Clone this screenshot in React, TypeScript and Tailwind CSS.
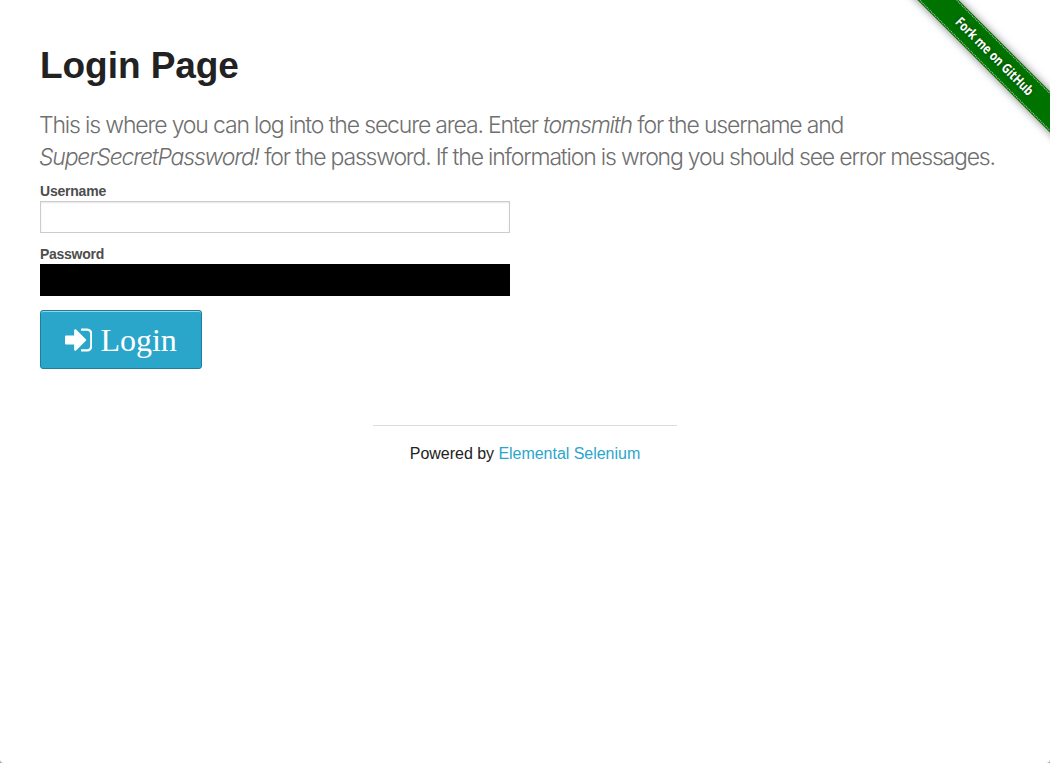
import React from "react";

function ForkRibbon() {
  return (
    <div className="pointer-events-none absolute top-0 right-0 h-[150px] w-[150px] overflow-hidden">
      <a
        href="#"
        className="absolute top-[42px] left-[-18px] flex h-[29px] w-[225px] rotate-45 items-center bg-[#007200] py-px shadow-[0_0_8px_0_rgba(0,0,0,0.5)]"
      >
        <span className="flex h-[27px] w-full items-center justify-center border-y border-dotted border-white/70 font-['Open_Sans',sans-serif] text-[13.5px] font-bold whitespace-nowrap text-white [text-shadow:0_0_4px_rgba(0,0,0,0.4)]">
          <span className="inline-block scale-x-[0.82]">Fork me on GitHub</span>
        </span>
      </a>
    </div>
  );
}

function SignInIcon() {
  return (
    <svg viewBox="0 0 1536 1792" className="h-8 w-[27.43px] shrink-0" fill="currentColor">
      <path d="M1184 896q0-26-19-45L621 307q-19-19-45-19t-45 19-19 45v288H64q-26 0-45 19T0 704v384q0 26 19 45t45 19h448v288q0 26 19 45t45 19 45-19l544-544q19-19 19-45zm352-352v704q0 119-84.5 203.5T1248 1536H928q-13 0-22.5-9.5T896 1504q0-4-1-20t-.5-26.5 3-23.5 10-19.5T928 1408h320q66 0 113-47t47-113V544q0-66-47-113t-113-47H936l-11.5-1-11.5-3-8-5.5-7-9-2-13.5q0-4-1-20t-.5-26.5 3-23.5 10-19.5T928 256h320q119 0 203.5 84.5T1536 544z" />
    </svg>
  );
}

function WindowCorners() {
  return (
    <div className="pointer-events-none absolute inset-x-0 bottom-0 flex justify-between text-[#aaa]">
      <svg viewBox="0 0 4 4" className="h-1 w-1" fill="currentColor">
        <path d="M0 0Q0 4 4 4H0Z" />
      </svg>
      <svg viewBox="0 0 4 4" className="h-1 w-1" fill="currentColor">
        <path d="M4 0Q4 4 0 4H4Z" />
      </svg>
    </div>
  );
}

export default function App() {
  return (
    <div className="relative h-[763px] w-full overflow-hidden bg-white px-10 pt-10 font-['Liberation_Sans',sans-serif] text-[#222]">
      <ForkRibbon />
      <h2 className="text-[37px] leading-[52px] font-bold tracking-[-0.05px]">Login Page</h2>
      <h4 className="mt-[17px] -ml-px font-['Inter',sans-serif] text-[23px] leading-8 font-light whitespace-nowrap text-[#6f6f6f]">
        <span className="block tracking-[-1.16px]">
          This is where you can log into the secure area. Enter <em>tomsmith</em> for the username and
        </span>
        <span className="block tracking-[-1.19px]">
          <em>SuperSecretPassword!</em> for the password. If the information is wrong you should see error messages.
        </span>
      </h4>
      <form className="mt-[8px] flex w-[470px] flex-col items-start">
        <label htmlFor="username" className="text-[14px] leading-5 font-bold tracking-[-0.22px] text-[#4d4d4d]">
          Username
        </label>
        <input
          id="username"
          type="text"
          className="h-8 w-full border border-[#ccc] bg-white px-2 shadow-[inset_0_1px_2px_rgba(0,0,0,0.1)] outline-none"
        />
        <label htmlFor="password" className="mt-[11px] text-[14px] leading-5 font-bold tracking-[-0.27px] text-[#4d4d4d]">
          Password
        </label>
        <input id="password" type="password" className="h-8 w-full bg-black px-2 text-white outline-none" />
        <button
          type="button"
          className="mt-[14px] flex h-[59px] w-[162px] items-center rounded-[3px] border border-[#1e7f9c] bg-[#2ba6cb] pl-6 text-white shadow-[inset_0_1px_0_rgba(255,255,255,0.5)]"
        >
          <SignInIcon />
          <span className="ml-2 pt-px font-['Liberation_Serif',serif] text-[32px] leading-8">Login</span>
        </button>
      </form>
      <footer className="mx-auto mt-14 w-[304px] border-t border-[#ddd] pt-4 text-center text-[16px] leading-6 whitespace-nowrap">
        <span className="tracking-[-0.03px]">
          Powered by <a href="#" className="text-[#2ba6cb]">Elemental Selenium</a>
        </span>
      </footer>
      <WindowCorners />
    </div>
  );
}
